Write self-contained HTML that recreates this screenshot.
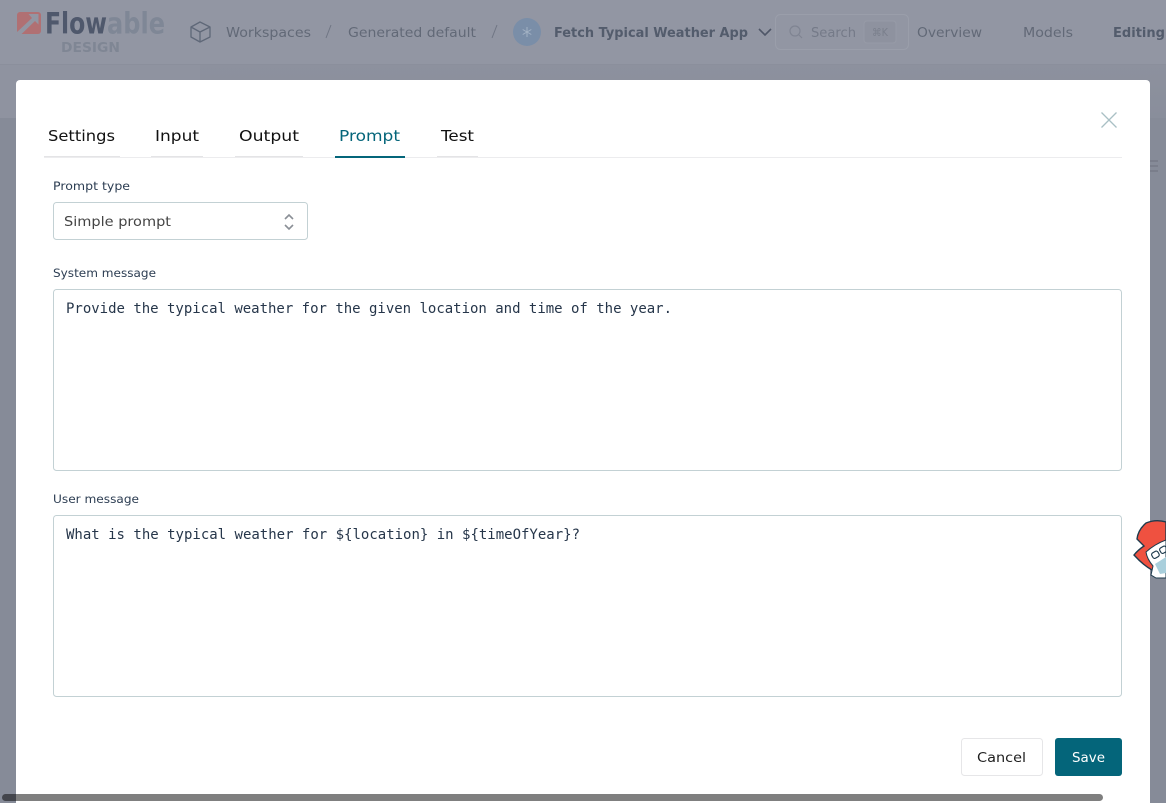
<!DOCTYPE html>
<html><head><meta charset="utf-8"><title>Flowable Design</title>
<style>
html,body{margin:0;padding:0;width:1166px;height:803px;overflow:hidden;background:#8a8f9c}
svg{display:block;position:absolute;left:0;top:0}
text{font-family:"DejaVu Sans","Liberation Sans",sans-serif}
.m{font-family:"DejaVu Sans Mono","Liberation Mono",monospace;font-size:14px;fill:#26364a}
</style></head><body>
<svg width="1166" height="803" viewBox="0 0 1166 803" xmlns="http://www.w3.org/2000/svg">
<defs>
<linearGradient id="g" x1="0" y1="0" x2="0" y2="1"><stop offset="0" stop-color="#8d919e"/><stop offset="1" stop-color="#898e9b"/></linearGradient>
<filter id="b"><feGaussianBlur stdDeviation="0.35"/></filter>
</defs>
<rect width="1166" height="803" fill="#868b98"/>
<rect y="64" width="1166" height="54" fill="url(#g)"/>
<rect y="64" width="200" height="54" fill="#8f93a0"/>
<rect width="1166" height="64" fill="#9296a3"/>
<rect y="64" width="1166" height="1" fill="#8b8f9c"/>
<g filter="url(#b)">
<rect x="17" y="12" width="24" height="22" rx="3" fill="#b07073"/>
<path d="M38.5 14H28.5L32 18L16 33V35.5H20L35 21L38.5 24.5Z" fill="#9296a3"/>
<text x="45" y="33.5" font-size="29" font-weight="700" fill="#4f596c" textLength="62" lengthAdjust="spacingAndGlyphs">Flow</text>
<text x="107" y="33.5" font-size="29" font-weight="700" fill="#7f8796" textLength="58" lengthAdjust="spacingAndGlyphs">able</text>
<text x="61" y="52" font-size="13" font-weight="700" fill="#7f8694" textLength="59" lengthAdjust="spacingAndGlyphs">DESIGN</text>
<path d="M200 22L210 27V37L200 42L191 37V27ZM191 27L200 32L210 27M200 32V42" fill="none" stroke="#5f6778" stroke-width="1.3" stroke-linejoin="round"/>
<text x="226" y="37" font-size="13.5" fill="#626977" textLength="85" lengthAdjust="spacingAndGlyphs">Workspaces</text>
<path d="M331 25L326 38" stroke="#6f7583" stroke-width="1" fill="none"/>
<text x="348" y="37" font-size="13.5" fill="#626977" textLength="128" lengthAdjust="spacingAndGlyphs">Generated default</text>
<path d="M497 25L492 38" stroke="#6f7583" stroke-width="1" fill="none"/>
<circle cx="527" cy="32" r="14" fill="#7a8ea8"/>
<path d="M527 27V37M522.7 29.5L531.3 34.5M522.7 34.5L531.3 29.5" stroke="#a3b2c4" stroke-width="1"/>
<text x="554" y="37" font-size="13.5" font-weight="700" fill="#535b6c" textLength="194" lengthAdjust="spacingAndGlyphs">Fetch Typical Weather App</text>
<path d="M759 29L765 35L771 29" fill="none" stroke="#4f5767" stroke-width="1.6"/>
<rect x="775.5" y="14.5" width="133" height="35" rx="5" fill="none" stroke="#9a9eaa"/>
<circle cx="795" cy="31" r="5" fill="none" stroke="#7f8492" stroke-width="1.2"/>
<path d="M799 35L802 38" stroke="#7f8492" stroke-width="1.2"/>
<text x="811" y="37" font-size="13.5" fill="#747a88" textLength="45" lengthAdjust="spacingAndGlyphs">Search</text>
<rect x="864" y="21" width="32" height="22" rx="3" fill="#8e929f" stroke="#979ba7"/>
<text x="872" y="36" font-size="10.5" fill="#7a7f8c" textLength="16" lengthAdjust="spacingAndGlyphs">⌘K</text>
<text x="917" y="37" font-size="13.5" fill="#626977" textLength="65" lengthAdjust="spacingAndGlyphs">Overview</text>
<text x="1023" y="37" font-size="13.5" fill="#626977" textLength="50" lengthAdjust="spacingAndGlyphs">Models</text>
<text x="1113" y="37" font-size="13.5" font-weight="700" fill="#535b6c" textLength="52" lengthAdjust="spacingAndGlyphs">Editing</text>
</g>
<path d="M1150 161H1158M1150 166H1158M1150 171H1158" stroke="#6d717e" stroke-width="1"/>
<rect x="16" y="80" width="1134" height="730" rx="4" fill="#fff"/>
<path d="M1146 523Q1156 519 1166 522V562L1152 570Q1143 565 1134 555Q1138 550 1144 546L1137 539Q1138 530 1146 523Z" fill="#ef5140" stroke="#1e3b4d" stroke-width="1.4"/>
<path d="M1166 540Q1155 544 1146 552Q1147 559 1153 566L1151 575L1156 578H1166Z" fill="#fff" stroke="#1e3b4d" stroke-width="1"/>
<path d="M1155 564L1166 557V573L1160 574Z" fill="#a9cfdc"/>
<rect x="1152" y="552" width="7" height="6" rx="2" fill="none" stroke="#1e3b4d" stroke-width="1.2" transform="rotate(-30 1155 555)"/>
<rect x="1160" y="547" width="7" height="6" rx="2" fill="none" stroke="#1e3b4d" stroke-width="1.2" transform="rotate(-30 1163 550)"/>
<g font-size="15.5" fill="#111">
<text x="48" y="141" textLength="67" lengthAdjust="spacingAndGlyphs">Settings</text>
<text x="155" y="141" textLength="44" lengthAdjust="spacingAndGlyphs">Input</text>
<text x="239" y="141" textLength="60" lengthAdjust="spacingAndGlyphs">Output</text>
<text x="339" y="141" textLength="61" lengthAdjust="spacingAndGlyphs" fill="#04657a">Prompt</text>
<text x="441" y="141" textLength="33" lengthAdjust="spacingAndGlyphs">Test</text>
</g>
<rect x="44" y="157" width="1078" height="1" fill="#ececee"/>
<g fill="#e4e4e6"><rect x="44" y="156" width="76" height="1"/><rect x="151" y="156" width="52" height="1"/><rect x="235" y="156" width="68" height="1"/><rect x="437" y="156" width="41" height="1"/></g>
<rect x="335" y="156" width="70" height="2" fill="#04657a"/>
<path d="M1101.5 112.5L1116.5 127.5M1116.5 112.5L1101.5 127.5" stroke="#a9c0c5" stroke-width="1.3"/>
<g font-size="11.5" fill="#2c3d52">
<text x="53" y="190" textLength="77" lengthAdjust="spacingAndGlyphs">Prompt type</text>
<text x="53" y="277" textLength="103" lengthAdjust="spacingAndGlyphs">System message</text>
<text x="53" y="503" textLength="86" lengthAdjust="spacingAndGlyphs">User message</text>
</g>
<rect x="53.5" y="202.5" width="254" height="37" rx="3" fill="#fff" stroke="#c3d1d4"/>
<text x="64" y="226" font-size="13.5" fill="#444" textLength="107" lengthAdjust="spacingAndGlyphs">Simple prompt</text>
<path d="M285 219L289 215L293 219M285 225L289 229L293 225" fill="none" stroke="#8a8f96" stroke-width="1.6"/>
<rect x="53.5" y="289.5" width="1068" height="181" rx="3" fill="#fff" stroke="#c3d1d4"/>
<text class="m" x="66" y="313" textLength="606" lengthAdjust="spacing">Provide the typical weather for the given location and time of the year.</text>
<rect x="53.5" y="515.5" width="1068" height="181" rx="3" fill="#fff" stroke="#c3d1d4"/>
<text class="m" x="66" y="539" textLength="514" lengthAdjust="spacing">What is the typical weather for ${location} in ${timeOfYear}?</text>
<rect x="961.5" y="738.5" width="81" height="37" rx="3" fill="#fff" stroke="#e6e6e8"/>
<text x="977" y="762" font-size="13.5" fill="#1d1d1d" textLength="49" lengthAdjust="spacingAndGlyphs">Cancel</text>
<rect x="1055" y="738" width="67" height="38" rx="3" fill="#04657a"/>
<text x="1072" y="762" font-size="13.5" fill="#fff" textLength="33" lengthAdjust="spacingAndGlyphs">Save</text>
<rect x="2" y="794" width="1101" height="7" rx="3.5" fill="#000" fill-opacity=".5"/>
</svg>
</body></html>
